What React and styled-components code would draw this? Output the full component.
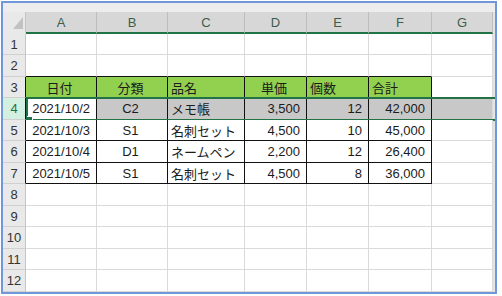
import styled, { createGlobalStyle } from 'styled-components';

const GlobalStyle = createGlobalStyle`
  html, body {
    margin: 0;
    padding: 0;
    background: #ffffff;
  }
  body {
    font-family: 'Liberation Sans', 'Noto Sans CJK JP', sans-serif;
  }
`;

const COLS = [
  { key: 'A', w: 71 },
  { key: 'B', w: 71 },
  { key: 'C', w: 77 },
  { key: 'D', w: 62 },
  { key: 'E', w: 62 },
  { key: 'F', w: 63 },
  { key: 'G', w: 61 },
];

const HEAD = [
  { v: '日付', a: 'center' },
  { v: '分類', a: 'center' },
  { v: '品名', a: 'left' },
  { v: '単価', a: 'center' },
  { v: '個数', a: 'left' },
  { v: '合計', a: 'left' },
];

const DATA = [
  ['2021/10/2', 'C2', 'メモ帳', '3,500', '12', '42,000'],
  ['2021/10/3', 'S1', '名刺セット', '4,500', '10', '45,000'],
  ['2021/10/4', 'D1', 'ネームペン', '2,200', '12', '26,400'],
  ['2021/10/5', 'S1', '名刺セット', '4,500', '8', '36,000'],
];

const ALIGN = ['right', 'center', 'left', 'right', 'right', 'right'];

const Frame = styled.div`
  margin: 1px;
  width: 492px;
  border: 2px solid #6f97da;
  display: flex;
  flex-direction: column;
  background: #ffffff;
`;

const TopStrip = styled.div`
  height: 9px;
  background: #ededed;
`;

const Body = styled.div`
  display: flex;
`;

const Sheet = styled.div`
  width: 490px;
  display: flex;
  flex-direction: column;
`;

const RightStrip = styled.div`
  width: 2px;
  background: #e4e4e4;
`;

const Row = styled.div`
  display: flex;
  height: ${(p) => p.$h}px;
  position: relative;
`;

const Corner = styled.div`
  box-sizing: border-box;
  width: 23px;
  height: 100%;
  background: #e9e9e9;
  border-right: 1px solid #c4c4c4;
  border-bottom: 2px solid #e9e9e9;
  position: relative;

  &::after {
    content: '';
    position: absolute;
    right: 2px;
    bottom: 3px;
    width: 0;
    height: 0;
    border-left: 10px solid transparent;
    border-bottom: 12px solid #c2c2c2;
  }
`;

const ColHead = styled.div`
  box-sizing: border-box;
  width: ${(p) => p.$w}px;
  height: 100%;
  background: #d7d7d7;
  border-right: 1px solid #bdbdbd;
  border-bottom: 2px solid #217346;
  display: flex;
  align-items: center;
  justify-content: center;
  font-size: 13px;
  color: #3d5e4d;
`;

const RowHead = styled.div`
  box-sizing: border-box;
  width: 23px;
  height: 100%;
  background: ${(p) => (p.$active ? '#d3efdf' : '#e9e9e9')};
  color: ${(p) => (p.$active ? '#217346' : '#333333')};
  border-right: 1px solid ${(p) => (p.$boxed ? '#111111' : '#c4c4c4')};
  border-bottom: 1px solid #d0d0d0;
  display: flex;
  align-items: center;
  justify-content: center;
  font-size: 13px;
`;

const Cell = styled.div`
  box-sizing: border-box;
  width: ${(p) => p.$w}px;
  height: 100%;
  background: ${(p) => p.$bg || '#ffffff'};
  border-right: 1px solid ${(p) => (p.$boxR ? '#111111' : '#dadada')};
  border-bottom: 1px solid ${(p) => (p.$boxB ? '#111111' : '#dadada')};
  display: flex;
  align-items: center;
  justify-content: ${(p) =>
    p.$align === 'right' ? 'flex-end' : p.$align === 'center' ? 'center' : 'flex-start'};
  padding: 0 6px 0 3px;
  font-size: 13px;
  color: #1b1b1b;
  white-space: nowrap;
`;

const Selection = styled.div`
  position: absolute;
  left: 23px;
  right: -2px;
  top: -1px;
  bottom: -1px;
  border: 2px solid #217346;
  border-right: none;
  pointer-events: none;
`;

const Handle = styled.div`
  position: absolute;
  left: -1px;
  bottom: -3px;
  width: 5px;
  height: 5px;
  background: #217346;
  border: 1px solid #ffffff;
  border-left: none;
  border-bottom: none;
`;

const rowHeight = (n) => (n % 2 === 1 ? 21 : 22);

const cellFor = (r, ci) => {
  const inTable = r >= 3 && r <= 7 && ci < 6;
  const base = { $boxR: inTable, $boxB: inTable || (r === 2 && ci < 6) };
  if (r === 3 && ci < 6) return { ...base, $bg: '#92d050', $align: HEAD[ci].a, v: HEAD[ci].v };
  if (r >= 4 && r <= 7 && ci < 6) {
    const bg = r === 4 && ci > 0 ? '#c8c8c8' : '#ffffff';
    return { ...base, $bg: bg, $align: ALIGN[ci], v: DATA[r - 4][ci] };
  }
  if (r === 4) return { ...base, $bg: '#c8c8c8', v: '' };
  return { ...base, v: '' };
};

const App = () => {
  const rows = Array.from({ length: 12 }, (_, i) => i + 1);

  return (
    <>
      <GlobalStyle />
      <Frame>
        <TopStrip />
        <Body>
          <Sheet>
            <Row $h={22}>
              <Corner />
              {COLS.map((c) => (
                <ColHead key={c.key} $w={c.w}>
                  {c.key}
                </ColHead>
              ))}
            </Row>
            {rows.map((r) => (
              <Row key={r} $h={rowHeight(r)}>
                <RowHead $active={r === 4} $boxed={r >= 3 && r <= 7}>
                  {r}
                </RowHead>
                {COLS.map((c, ci) => {
                  const { v, ...props } = cellFor(r, ci);
                  return (
                    <Cell key={c.key} $w={c.w} {...props}>
                      {v}
                    </Cell>
                  );
                })}
                {r === 4 && (
                  <Selection>
                    <Handle />
                  </Selection>
                )}
              </Row>
            ))}
          </Sheet>
          <RightStrip />
        </Body>
      </Frame>
    </>
  );
};

export default App;
